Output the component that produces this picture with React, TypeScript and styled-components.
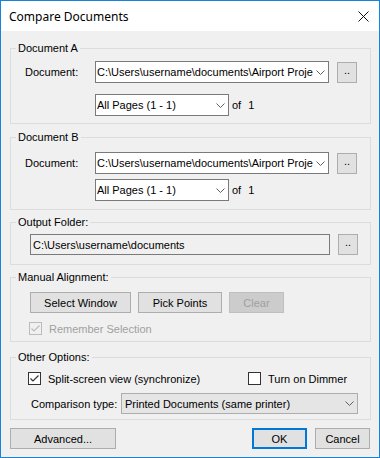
import React from "react";
import styled, { createGlobalStyle } from "styled-components";

const GlobalStyle = createGlobalStyle`
  html, body {
    margin: 0;
    padding: 0;
    background: #fff;
  }
  body {
    font-family: "Liberation Sans", Arial, sans-serif;
    font-size: 11px;
    color: #000;
  }
`;

const Window = styled.div`
  width: 380px;
  height: 458px;
  box-sizing: border-box;
  border: 1px solid #1883d7;
  background: #f0f0f0;
  display: flex;
  flex-direction: column;
`;

const TitleBar = styled.div`
  height: 30px;
  flex: none;
  background: #fff;
  display: flex;
  align-items: center;
  justify-content: space-between;
  padding: 0 10px 0 8px;
  font-family: "Noto Sans", "Open Sans", sans-serif;
  font-size: 12px;
`;

const Body = styled.div`
  flex: 1;
  padding: 11px 8px 0 9px;
  display: flex;
  flex-direction: column;
`;

const Group = styled.fieldset<{ $mt: number }>`
  margin: ${(p) => p.$mt}px 0 0;
  padding: 0;
  border: 1px solid #dcdcdc;
  min-width: 0;
`;

const Legend = styled.legend`
  margin-left: 5px;
  padding: 0 2px;
  line-height: 13px;
  font-size: 11px;
`;

const GroupBody = styled.div<{ $pt: number; $pb: number; $gap: number }>`
  display: flex;
  flex-direction: column;
  padding: ${(p) => p.$pt}px 0 ${(p) => p.$pb}px;
  gap: ${(p) => p.$gap}px;
`;

const Row = styled.div<{ $indent: number }>`
  display: flex;
  align-items: center;
  padding-left: ${(p) => p.$indent}px;
`;

const Label = styled.span<{ $w: number }>`
  width: ${(p) => p.$w}px;
  flex: none;
`;

const Combo = styled.div<{ $w: number; $h?: number; $flat?: boolean }>`
  width: ${(p) => p.$w}px;
  height: ${(p) => p.$h ?? 22}px;
  box-sizing: border-box;
  flex: none;
  display: flex;
  align-items: center;
  border: 1px solid ${(p) => (p.$flat ? "#adadad" : "#7a7a7a")};
  background: ${(p) => (p.$flat ? "#e5e5e5" : "#fff")};
  padding-left: ${(p) => (p.$flat ? 3 : 1)}px;
`;

const ComboText = styled.span`
  flex: 1;
  min-width: 0;
  overflow: hidden;
  white-space: nowrap;
`;

const Chevron = styled.span`
  width: 15px;
  flex: none;
  display: flex;
  justify-content: center;
  align-items: center;
`;

const TextBox = styled.div`
  width: 300px;
  height: 21px;
  box-sizing: border-box;
  flex: none;
  display: flex;
  align-items: center;
  padding-left: 2px;
  border: 1px solid #7a7a7a;
  background: #f0f0f0;
  white-space: nowrap;
  overflow: hidden;
`;

const Button = styled.button<{ $w: number; $default?: boolean }>`
  width: ${(p) => p.$w}px;
  height: 21px;
  box-sizing: border-box;
  flex: none;
  margin: 0;
  padding: 0;
  font-family: "Liberation Sans", Arial, sans-serif;
  font-size: 11px;
  color: #000;
  background: #e1e1e1;
  border: ${(p) => (p.$default ? "2px solid #0078d7" : "1px solid #adadad")};
  &:disabled {
    color: #a0a0a0;
    background: #cccccc;
    border-color: #bfbfbf;
  }
`;

const BrowseButton = styled(Button)`
  margin-left: 8px;
  padding-bottom: 4px;
  line-height: 1;
`;

const Of = styled.span`
  margin-left: 3px;
  display: flex;
  gap: 7px;
`;

const Buttons = styled.div`
  display: flex;
  gap: 7px;
  padding-left: 19px;
`;

const Check = styled.label<{ $disabled?: boolean; $w?: number }>`
  display: flex;
  align-items: center;
  gap: 7px;
  height: 13px;
  width: ${(p) => (p.$w ? `${p.$w}px` : "auto")};
  flex: none;
  color: ${(p) => (p.$disabled ? "#a0a0a0" : "#000")};
`;

const Box = styled.span<{ $disabled?: boolean }>`
  width: 13px;
  height: 13px;
  box-sizing: border-box;
  flex: none;
  display: flex;
  align-items: center;
  justify-content: center;
  border: 1px solid ${(p) => (p.$disabled ? "#bcbcbc" : "#333333")};
  background: ${(p) => (p.$disabled ? "#f0f0f0" : "#fff")};
`;

const Footer = styled.div`
  display: flex;
  align-items: center;
  margin-top: 8px;
  padding-right: 1px;
  gap: 8px;
`;

const Spacer = styled.span`
  flex: 1;
`;

const ChevronIcon = () => (
  <svg width="9" height="5" viewBox="0 0 9 5">
    <polyline points="0.5,0.5 4.5,4.5 8.5,0.5" fill="none" stroke="#606060" strokeWidth="1" />
  </svg>
);

const CloseIcon = () => (
  <svg width="11" height="11" viewBox="0 0 11 11">
    <path d="M0.5 0.5 L10.5 10.5 M10.5 0.5 L0.5 10.5" stroke="#111" strokeWidth="1" />
  </svg>
);

const CheckBox = ({ checked, disabled }: { checked: boolean; disabled?: boolean }) => (
  <Box $disabled={disabled}>
    {checked && (
      <svg width="11" height="11" viewBox="0 0 11 11">
        <polyline
          points="1.5,5.5 4,8 9.5,2.5"
          fill="none"
          stroke={disabled ? "#bcbcbc" : "#333"}
          strokeWidth="1.2"
        />
      </svg>
    )}
  </Box>
);

// the combo shows only what fits before the arrow
const DocPath = "C:\\Users\\username\\documents\\Airport Proje";

const DocumentGroup = ({
  title,
  mt,
  pt,
  pb,
  gap,
}: {
  title: string;
  mt: number;
  pt: number;
  pb: number;
  gap: number;
}) => (
  <Group $mt={mt}>
    <Legend>{title}</Legend>
    <GroupBody $pt={pt} $pb={pb} $gap={gap}>
      <Row $indent={14}>
        <Label $w={70}>Document:</Label>
        <Combo $w={234}>
          <ComboText>{DocPath}</ComboText>
          <Chevron>
            <ChevronIcon />
          </Chevron>
        </Combo>
        <BrowseButton $w={20}>..</BrowseButton>
      </Row>
      <Row $indent={84}>
        <Combo $w={134}>
          <ComboText>All Pages (1 - 1)</ComboText>
          <Chevron>
            <ChevronIcon />
          </Chevron>
        </Combo>
        <Of>
          <span>of</span>
          <span>1</span>
        </Of>
      </Row>
    </GroupBody>
  </Group>
);

export default function App() {
  return (
    <>
      <GlobalStyle />
      <Window>
        <TitleBar>
          <span>Compare Documents</span>
          <CloseIcon />
        </TitleBar>
        <Body>
          <DocumentGroup title="Document A" mt={0} pt={6} pb={7} gap={11} />
          <DocumentGroup title="Document B" mt={7} pt={8} pb={8} gap={5} />

          <Group $mt={6}>
            <Legend>Output Folder:</Legend>
            <GroupBody $pt={5} $pb={9} $gap={0}>
              <Row $indent={19}>
                <TextBox>{"C:\\Users\\username\\documents"}</TextBox>
                <BrowseButton $w={20}>..</BrowseButton>
              </Row>
            </GroupBody>
          </Group>

          <Group $mt={6}>
            <Legend>Manual Alignment:</Legend>
            <GroupBody $pt={8} $pb={6} $gap={9}>
              <Buttons>
                <Button $w={101}>Select Window</Button>
                <Button $w={84}>Pick Points</Button>
                <Button $w={55} disabled>
                  Clear
                </Button>
              </Buttons>
              <Row $indent={18}>
                <Check $disabled>
                  <CheckBox checked disabled />
                  Remember Selection
                </Check>
              </Row>
            </GroupBody>
          </Group>

          <Group $mt={9}>
            <Legend>Other Options:</Legend>
            <GroupBody $pt={8} $pb={5} $gap={8}>
              <Row $indent={17}>
                <Check $w={220}>
                  <CheckBox checked />
                  Split-screen view (synchronize)
                </Check>
                <Check>
                  <CheckBox checked={false} />
                  Turn on Dimmer
                </Check>
              </Row>
              <Row $indent={20}>
                <Label $w={90}>Comparison type:</Label>
                <Combo $w={237} $h={21} $flat>
                  <ComboText>Printed Documents (same printer)</ComboText>
                  <Chevron>
                    <ChevronIcon />
                  </Chevron>
                </Combo>
              </Row>
            </GroupBody>
          </Group>

          <Footer>
            <Button $w={106}>Advanced...</Button>
            <Spacer />
            <Button $w={55} $default>
              OK
            </Button>
            <Button $w={55}>Cancel</Button>
          </Footer>
        </Body>
      </Window>
    </>
  );
}
